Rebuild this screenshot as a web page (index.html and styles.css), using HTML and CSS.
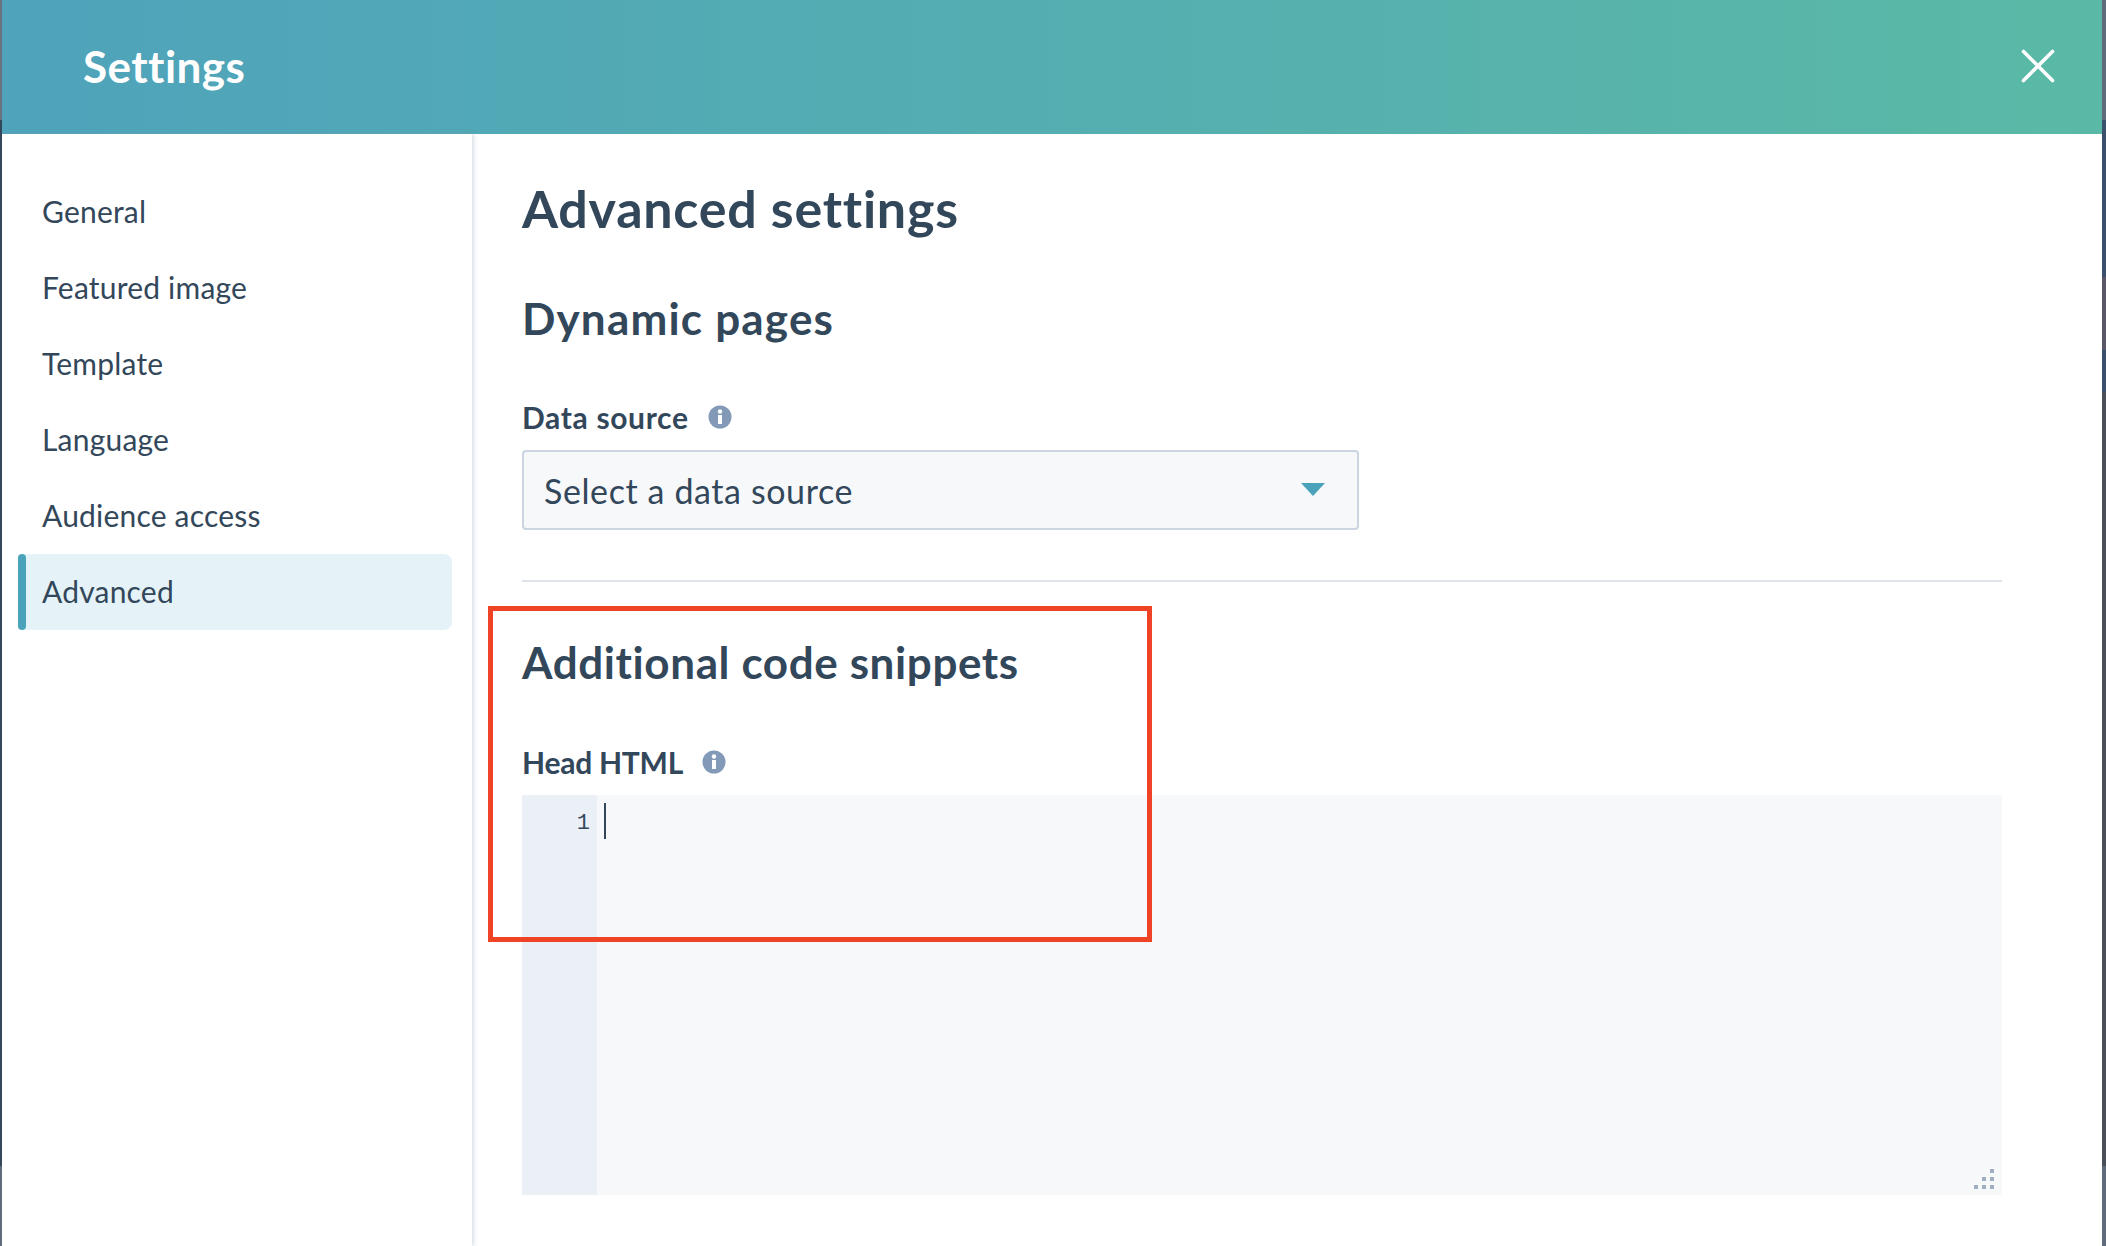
FILE: index.html
```html
<!DOCTYPE html>
<html lang="en">
<head>
<meta charset="utf-8">
<title>Settings</title>
<link rel="stylesheet" href="styles.css">
</head>
<body>
<div class="edge edge-left"></div>
<div class="modal">
  <header class="modal-header">
    <h1 class="modal-title">Settings</h1>
    <button class="close" aria-label="Close">
      <svg width="34" height="34" viewBox="0 0 34 34"><path d="M2.5 2.5 L31.5 31.5 M31.5 2.5 L2.5 31.5" stroke="#fff" stroke-width="3.6" stroke-linecap="round" fill="none"/></svg>
    </button>
  </header>
  <div class="modal-body">
    <nav class="sidebar">
      <a class="nav-item">General</a>
      <a class="nav-item">Featured image</a>
      <a class="nav-item">Template</a>
      <a class="nav-item">Language</a>
      <a class="nav-item">Audience access</a>
      <a class="nav-item active">Advanced</a>
    </nav>
    <main class="content">
      <h2 class="page-title">Advanced settings</h2>
      <h3 class="section-title first">Dynamic pages</h3>
      <label class="field-label">Data source
        <svg class="info" width="24" height="24" viewBox="0 0 24 24"><circle cx="12" cy="12" r="11.5" fill="#829ab8"/><circle cx="12" cy="6.5" r="2.2" fill="#fff"/><rect x="10" y="10" width="4" height="9" fill="#fff"/></svg>
      </label>
      <div class="select">
        <span>Select a data source</span>
        <svg width="24" height="14" viewBox="0 0 24 14"><path d="M0 0 H24 L12 13 Z" fill="#4ba3bb"/></svg>
      </div>
      <hr class="divider">
      <h3 class="section-title second">Additional code snippets</h3>
      <label class="field-label head">Head HTML
        <svg class="info" width="24" height="24" viewBox="0 0 24 24"><circle cx="12" cy="12" r="11.5" fill="#829ab8"/><circle cx="12" cy="6.5" r="2.2" fill="#fff"/><rect x="10" y="10" width="4" height="9" fill="#fff"/></svg>
      </label>
      <div class="editor">
        <div class="gutter">1</div>
        <div class="code"><span class="caret"></span>
          <svg class="grip" width="20" height="20" viewBox="0 0 20 20"><g fill="#a0aec2"><rect x="16" y="0" width="4" height="4"/><rect x="8" y="8" width="4" height="4"/><rect x="16" y="8" width="4" height="4"/><rect x="0" y="16" width="4" height="4"/><rect x="8" y="16" width="4" height="4"/><rect x="16" y="16" width="4" height="4"/></g></svg>
        </div>
      </div>
    </main>
  </div>
</div>
<div class="edge edge-right"></div>
<div class="highlight"></div>
</body>
</html>
```
FILE: styles.css
```css
* { box-sizing: border-box; }
html, body { margin: 0; height: 100%; }
body {
  display: flex;
  width: 2106px;
  height: 1246px;
  overflow: hidden;
  font-family: "Lato", "Noto Sans", sans-serif;
  color: #33475b;
  background: #fff;
}
.edge { flex: none; }
.edge-left { width: 2px; background: linear-gradient(#6b7280 0 120px, #33475b 120px 1166px, #5f6b7a 1166px); }
.edge-right { width: 4px; background: linear-gradient(#5f6b7a 0 120px, #3a506b 120px 277px, #5a5868 277px 350px, #3a506b 350px 392px, #4a4f58 392px 1166px, #5f6b7a 1166px); }
.modal { flex: 1; display: flex; flex-direction: column; min-width: 0; }
.modal-header {
  height: 134px;
  flex: none;
  display: flex;
  align-items: center;
  justify-content: space-between;
  padding: 0 47px 2px 81px;
  background: linear-gradient(90deg, #4fa3bb, #5ab9a6);
}
.modal-title { margin: 0; font-size: 44px; letter-spacing: .45px; font-weight: 700; color: #fff; }
.close { background: none; border: 0; padding: 0; display: flex; }
.modal-body { flex: 1; display: flex; min-height: 0; }
.sidebar {
  width: 470px;
  flex: none;
  display: flex;
  flex-direction: column;
  padding: 40px 20px 0 16px;
  box-shadow: 2px 0 4px rgba(130, 150, 180, .3);
}
.nav-item {
  height: 76px;
  display: flex;
  align-items: center;
  padding: 0 0 3px 24px;
  font-size: 30px;
  letter-spacing: .2px;
  border-radius: 8px;
}
.nav-item.active { padding-left: 0; background: #e5f3f8; }
.nav-item.active::before {
  content: "";
  width: 8px;
  align-self: stretch;
  margin: 0 16px -3px 0;
  border-radius: 4px;
  background: #4ba3bb;
}
.content { flex: 1; padding: 44px 100px 0 50px; min-width: 0; }
.page-title { margin: 0; font-size: 52px; letter-spacing: .75px; font-weight: 700; line-height: 60px; }
.section-title { padding-bottom: 3px; font-size: 44px; letter-spacing: .6px; font-weight: 700; line-height: 47px; }
.section-title.first { margin: 57px 0 0; letter-spacing: 1.2px; }
.section-title.second { margin: 57px 0 0; }
.field-label { display: flex; align-items: center; gap: 19px; margin-top: 58px; height: 30px; padding-bottom: 2px; font-size: 30px; letter-spacing: .65px; font-weight: 700; }
.field-label.head { margin-top: 59px; letter-spacing: -.25px; }
.select {
  margin-top: 17px;
  width: 837px;
  height: 80px;
  display: flex;
  align-items: center;
  justify-content: space-between;
  padding: 0 32px 0 20px;
  background: #f6f8fa;
  border: 2px solid #cbd6e2;
  border-radius: 4px;
  font-size: 34px;
  letter-spacing: .6px;
}
.divider { margin: 50px 0 0; border: 0; border-top: 2px solid #dfe3eb; }
.editor { margin-top: 17px; height: 400px; display: flex; background: #f6f8fa; }
.gutter {
  width: 75px;
  flex: none;
  background: #eaf0f6;
  padding: 16px 7px 0 0;
  text-align: right;
  font-family: "Liberation Mono", monospace;
  font-size: 22px;
}
.code { flex: 1; position: relative; }
.caret { display: block; width: 2px; height: 36px; margin: 8px 0 0 7px; background: #33475b; }
.grip { position: absolute; right: 8px; bottom: 6px; }
.highlight {
  position: absolute;
  left: 488px;
  top: 606px;
  width: 664px;
  height: 336px;
  border: 5px solid #ee4325;
}
```
